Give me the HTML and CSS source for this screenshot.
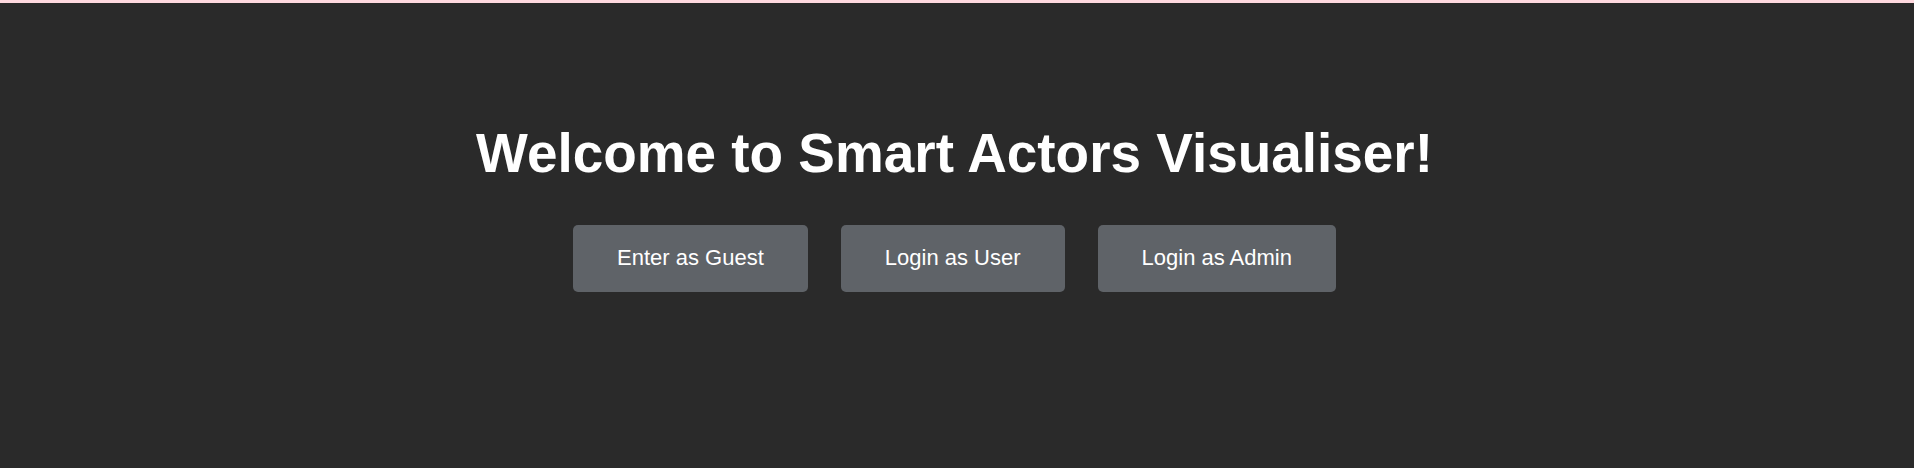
FILE: index.html
```html
<!DOCTYPE html>
<html lang="en">
<head>
<meta charset="utf-8">
<title>Smart Actors Visualiser</title>
<link rel="stylesheet" href="styles.css">
</head>
<body>
<main class="welcome">
  <h1 class="welcome-title">Welcome to Smart Actors Visualiser!</h1>
  <div class="welcome-actions">
    <button class="action-btn" type="button">Enter as Guest</button>
    <button class="action-btn" type="button">Login as User</button>
    <button class="action-btn" type="button">Login as Admin</button>
  </div>
</main>
</body>
</html>
```
FILE: styles.css
```css
html, body {
  margin: 0;
  padding: 0;
}
body {
  min-height: 100vh;
  box-sizing: border-box;
  background: #2a2a2a;
  border-top: 3px solid #ffd9df;
  font-family: "Liberation Sans", Arial, sans-serif;
  color: #ffffff;
}
.welcome {
  display: flex;
  flex-direction: column;
  align-items: center;
  padding-top: 119px;
  padding-right: 5px;
}
.welcome-title {
  margin: 0;
  font-size: 54.9px;
  line-height: 63px;
  font-weight: 700;
  color: #ffffff;
}
.welcome-actions {
  display: flex;
  gap: 33px;
  margin-top: 40px;
}
.action-btn {
  font-family: "Liberation Sans", Arial, sans-serif;
  font-size: 22px;
  line-height: 25px;
  color: #ffffff;
  background: #5f6368;
  border: none;
  border-radius: 5px;
  padding: 20px 44px 22px;
  cursor: pointer;
}
```
